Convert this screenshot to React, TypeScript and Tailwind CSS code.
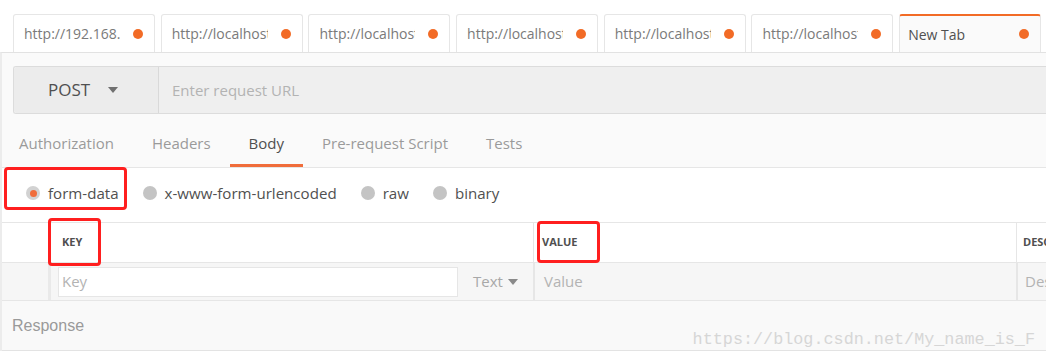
const openTabs = [
  "http://192.168.",
  "http://localhost",
  "http://localhost",
  "http://localhost",
  "http://localhost",
  "http://localhost",
];

const requestTabs = ["Authorization", "Headers", "Body", "Pre-request Script", "Tests"];

const bodyModes = [
  { label: "form-data", active: true },
  { label: "x-www-form-urlencoded", active: false },
  { label: "raw", active: false },
  { label: "binary", active: false },
];

function Caret({ className = "" }: { className?: string }) {
  return (
    <svg width="10" height="6" viewBox="0 0 10 6" className={className}>
      <path d="M0 0h10L5 6z" fill="currentColor" />
    </svg>
  );
}

export default function App() {
  return (
    <div className="relative w-[1046px] h-[359px] overflow-hidden bg-white font-['Open_Sans',sans-serif]">
      {/* open tabs */}
      <div className="flex gap-[5.7px] h-[52px] pt-[14px] pl-[13px] bg-white">
        {openTabs.map((t, i) => (
          <div
            key={i}
            className="shrink-0 w-[142px] h-[38px] flex items-center justify-between pl-[10px] pr-[11px] border border-b-0 border-[#e6e6e6] rounded-t-[3px] bg-white"
          >
            <span className="w-[96px] overflow-hidden whitespace-nowrap text-[14px] text-[#7a7a7a]">{t}</span>
            <span className="w-[10px] h-[10px] rounded-full bg-[#f26b26]" />
          </div>
        ))}
        <div className="shrink-0 w-[142px] h-[38px] flex items-center justify-between pl-[8px] pr-[11px] border-t-2 border-x border-t-[#f26b26] border-x-[#e6e6e6] rounded-t-[3px] bg-[#fafafa]">
          <span className="text-[14px] text-[#505050]">New Tab</span>
          <span className="w-[10px] h-[10px] rounded-full bg-[#f26b26]" />
        </div>
      </div>

      <div className="border-t border-[#e2e2e2] border-l-2 border-l-[#ececec]">
        {/* url bar */}
        <div className="bg-[#fafafa] pt-[13px] pl-[11px]">
          <div className="flex h-[48px] border border-r-0 border-[#dcdcdc] rounded-l-[3px] overflow-hidden">
            <div className="w-[145px] flex items-center bg-[#ececec] pl-[34px] border-r border-[#d9d9d9]">
              <span className="text-[17px] text-[#505050]">POST</span>
              <Caret className="ml-[18px] text-[#707070]" />
            </div>
            <div className="flex-1 flex items-center bg-[#efefef] pl-[13px]">
              <span className="text-[15px] text-[#b3b3b3]">Enter request URL</span>
            </div>
          </div>

          {/* request tabs */}
          <div className="flex h-[54px] items-end -ml-[11px] border-b border-[#e6e6e6]">
            {requestTabs.map((t) => {
              const active = t === "Body";
              return (
                <div
                  key={t}
                  className={`h-full flex items-center text-[15px] border-b-[3px] ${
                    active ? "border-[#f06d3b] text-[#505050]" : "border-transparent text-[#9a9a9a]"
                  } ${t === "Authorization" ? "pl-[17px] pr-[19px]" : "px-[19px]"}`}
                >
                  <span className="mt-[9px]">{t}</span>
                </div>
              );
            })}
          </div>
        </div>

        {/* body modes */}
        <div className="flex items-center h-[55px] bg-white pl-[24px] border-b border-[#e6e6e6]">
          {bodyModes.map((m) => (
            <div key={m.label} className="flex items-center mr-[24px] -mt-[3px]">
              <span
                className={`w-[14px] h-[14px] rounded-full flex items-center justify-center ${
                  m.active ? "bg-[#d2d2d2]" : "bg-[#c4c4c4]"
                }`}
              >
                {m.active && <span className="w-[7px] h-[7px] rounded-full bg-[#f06d3b]" />}
              </span>
              <span className="ml-[8px] text-[15.1px] text-[#505050]">{m.label}</span>
            </div>
          ))}
        </div>

        {/* table header */}
        <div className="flex h-[40px] bg-white border-b border-[#e6e6e6]">
          <div className="shrink-0 w-[46px]" />
          <div className="shrink-0 w-[485px] flex items-center pl-[14px] text-[11px] font-bold text-[#505050]">KEY</div>
          <div className="shrink-0 w-[483px] flex items-center pl-[8px] border-l border-[#e6e6e6] text-[11px] font-bold text-[#505050]">
            VALUE
          </div>
          <div className="shrink-0 flex items-center pl-[6px] border-l border-[#e6e6e6] text-[11px] font-bold text-[#505050] whitespace-nowrap">
            DESCRIPTION
          </div>
        </div>

        {/* key row */}
        <div className="flex h-[38px] bg-[#f6f6f6] border-b border-[#e6e6e6]">
          <div className="shrink-0 w-[46px]" />
          <div className="shrink-0 w-[485px] flex items-center pl-[7px] border-l-[3px] border-[#e9e9e9]">
            <div className="shrink-0 w-[400px] h-[30px] flex items-center bg-white border border-[#e6e6e6] pl-[3px] text-[15px] text-[#b3b3b3]">
              Key
            </div>
            <div className="flex items-center ml-[15px] text-[15px] text-[#a8a8a8]">
              Text
              <Caret className="ml-[5px] text-[#8a8a8a]" />
            </div>
          </div>
          <div className="shrink-0 w-[483px] flex items-center pl-[9px] border-l-2 border-[#e6e6e6] text-[15px] text-[#b3b3b3]">
            Value
          </div>
          <div className="shrink-0 flex items-center pl-[7px] border-l-2 border-[#e6e6e6] text-[15px] text-[#b3b3b3] whitespace-nowrap">
            Description
          </div>
        </div>

        {/* response */}
        <div className="relative h-[50px] bg-[#f9f9f9] border-b border-[#e3e3e3] flex items-center pl-[10px]">
          <span className="text-[16px] text-[#9a9a9a] font-['Liberation_Sans',sans-serif]">Response</span>
          <span className="absolute right-[11px] top-[26px] text-[16.8px] text-[#d6d6d6] font-['Liberation_Mono',monospace]">
            https://blog.csdn.net/My_name_is_F
          </span>
        </div>
      </div>

      {/* annotation boxes */}
      <div className="absolute left-[4px] top-[167px] w-[123px] h-[43px] border-[3px] border-[#ff1f1f] rounded-[4px]" />
      <div className="absolute left-[48px] top-[218px] w-[53px] h-[48px] border-[3px] border-[#ff1f1f] rounded-[4px]" />
      <div className="absolute left-[537px] top-[221px] w-[63px] h-[42px] border-[3px] border-[#ff1f1f] rounded-[4px]" />
    </div>
  );
}
